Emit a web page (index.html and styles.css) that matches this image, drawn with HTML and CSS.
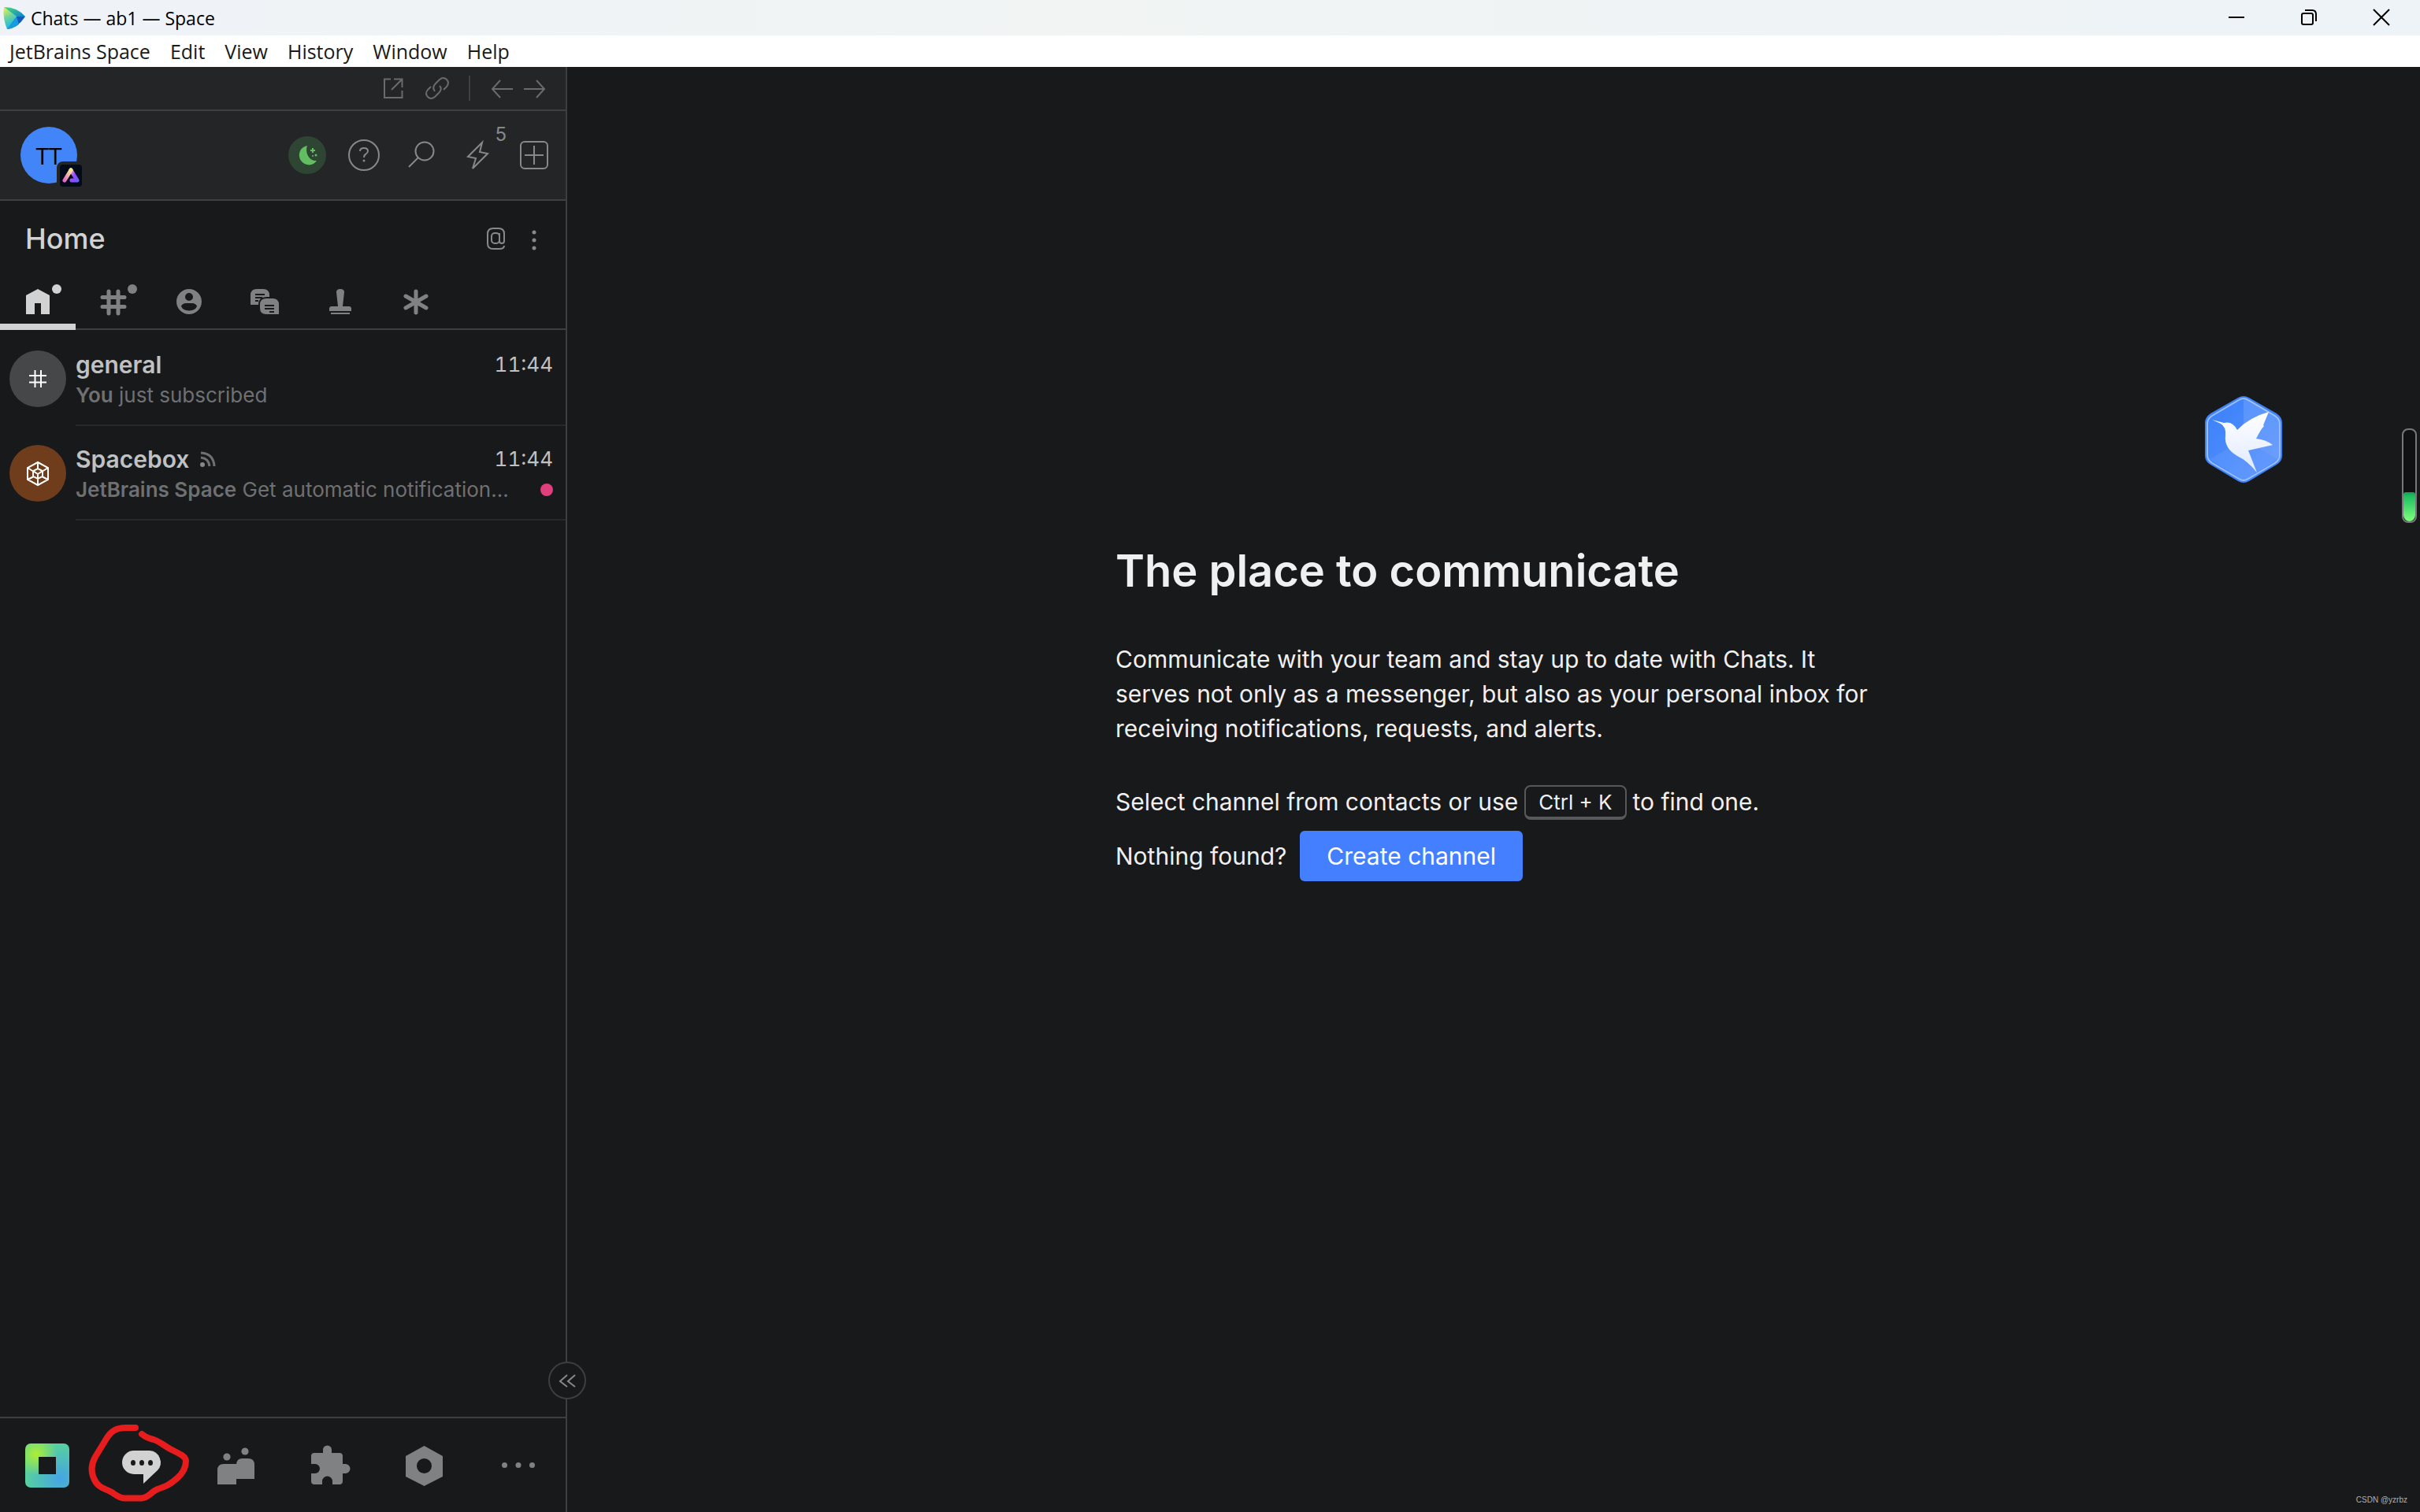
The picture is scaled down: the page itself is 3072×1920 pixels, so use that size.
FILE: index.html
```html
<!DOCTYPE html>
<html lang="en">
<head>
    <meta charset="UTF-8">
    <meta name="viewport" content="width=device-width, initial-scale=1.0">
    <title>Chats — ab1 — Space</title>
    <link rel="stylesheet" href="styles.css">
</head>
<body>
    <header class="titlebar">
        <svg class="app-logo" width="28" height="28" viewBox="0 0 28 28">
            <defs>
                <linearGradient id="logoLeft" x1="0" y1="0" x2="0.3" y2="1">
                    <stop offset="0" stop-color="#f6f547"/>
                    <stop offset="0.5" stop-color="#6fd49b"/>
                    <stop offset="1" stop-color="#16b8e8"/>
                </linearGradient>
                <linearGradient id="logoTop" x1="0" y1="0" x2="1" y2="1">
                    <stop offset="0" stop-color="#4ddc6f"/>
                    <stop offset="1" stop-color="#0a80d8"/>
                </linearGradient>
            </defs>
            <path d="M1 0Q-1 14 5 28L17 12Z" fill="url(#logoLeft)"/>
            <path d="M1 0Q18 0 28 12L17 12Z" fill="url(#logoTop)"/>
            <path d="M17 12H28Q18 27 5 28Z" fill="#1559bd"/>
            <path d="M17 12L20 22Q13 27 5 28Z" fill="#159be0"/>
        </svg>
        <span class="window-title">Chats — ab1 — Space</span>
        <div class="window-controls">
            <button aria-label="Minimize"><svg width="20" height="20" viewBox="0 0 20 20"><path d="M0 10H20"/></svg></button>
            <button aria-label="Restore"><svg width="20" height="20" viewBox="0 0 20 20"><rect x="1" y="5" width="14" height="14" rx="2"/><path d="M5 1H14Q19 1 19 6V15"/></svg></button>
            <button aria-label="Close"><svg width="20" height="20" viewBox="0 0 20 20"><path d="M0 0L20 20M20 0L0 20"/></svg></button>
        </div>
    </header>
    <nav class="menubar">
        <button>JetBrains Space</button>
        <button>Edit</button>
        <button>View</button>
        <button>History</button>
        <button>Window</button>
        <button>Help</button>
    </nav>

    <div class="workspace">
        <aside class="sidebar">
            <div class="browser-bar">
                <button aria-label="Open in browser"><svg width="32" height="32" viewBox="0 0 32 32"><path d="M13 4.500H5V28H27.500V19M17 4.500H27.500V15M27.500 4.500L14 18"/></svg></button>
                <button aria-label="Copy link"><svg width="32" height="32" viewBox="0 0 32 32"><path d="M13 20Q9 15 14 10L19 5Q24 1 28 5Q32 9 28 14L24 18M19 13Q23 17 18 22L13 27Q8 31 4 27Q0 23 4 18L8 14"/></svg></button>
                <span class="divider"></span>
                <div class="history">
                    <button aria-label="Back"><svg width="32" height="32" viewBox="0 0 32 32"><path d="M30 17H4M14 6L4 17L14 28"/></svg></button>
                    <button aria-label="Forward"><svg width="32" height="32" viewBox="0 0 32 32"><path d="M2 17H28M18 6L28 17L18 28"/></svg></button>
                </div>
            </div>

            <div class="user-bar">
                <button class="avatar user-avatar">TT
                    <span class="org-badge">
                        <svg width="28" height="28" viewBox="0 0 28 28">
                            <defs>
                                <linearGradient id="orgLeft" x1="0.8" y1="0" x2="0" y2="1">
                                    <stop offset="0" stop-color="#fde68c"/>
                                    <stop offset="1" stop-color="#e06ccb"/>
                                </linearGradient>
                                <linearGradient id="orgRight" x1="0" y1="0" x2="1" y2="1">
                                    <stop offset="0" stop-color="#e9b0e0"/>
                                    <stop offset="0.5" stop-color="#9a48ff"/>
                                    <stop offset="1" stop-color="#6a5cff"/>
                                </linearGradient>
                            </defs>
                            <path d="M14 7L22 20H15" stroke="url(#orgRight)"/>
                            <path d="M6 20L14 7" stroke="url(#orgLeft)"/>
                        </svg>
                    </span>
                </button>
                <div class="user-actions">
                    <button class="status" aria-label="Do not disturb"><svg width="48" height="48" viewBox="0 0 48 48"><path d="M24 12C21 20 26 32 36 31C32 38 22 38 17 32C11 25 14 14 24 12Z"/><path d="M31 15V21M28 18H34" class="spark"/><circle cx="35" cy="24" r="1.500"/><circle cx="31" cy="25" r="1"/></svg></button>
                    <button aria-label="Help"><svg width="48" height="48" viewBox="0 0 48 48"><circle cx="24" cy="24" r="19"/><path d="M19 19Q19 15 24 15Q29 15 29 19Q29 21 26 23Q24 24 24 27"/><circle cx="24" cy="31" r="1.500" class="solid"/></svg></button>
                    <button aria-label="Search"><svg width="48" height="48" viewBox="0 0 48 48"><circle cx="29" cy="19" r="11.500"/><path d="M21 27L9 39"/></svg></button>
                    <button class="todo" aria-label="To-do"><svg width="48" height="48" viewBox="0 0 48 48"><path d="M30 8L12 26L22 28L18 41L37 22L27 20Z"/></svg><span class="count">5</span></button>
                    <button aria-label="Create"><svg width="48" height="48" viewBox="0 0 48 48"><rect x="7" y="7" width="34" height="34" rx="5"/><path d="M24 12V36M12 24H36"/></svg></button>
                </div>
            </div>

            <div class="section-head">
                <h1>Home</h1>
                <div class="section-actions">
                    <button aria-label="Mentions"><svg width="48" height="48" viewBox="0 0 48 48"><rect x="18" y="17" width="10" height="13" rx="4"/><path d="M28 17V27Q28 30 31 30Q34 30 34 27V18Q34 11 27 11H20Q13 11 13 18V30Q13 37 20 37H28Q34 37 34 33"/></svg></button>
                    <button aria-label="More options"><svg width="48" height="48" viewBox="0 0 48 48" class="dots"><circle cx="24" cy="16" r="2.500"/><circle cx="24" cy="26" r="2.500"/><circle cx="24" cy="36" r="2.500"/></svg></button>
                </div>
            </div>

            <nav class="tabs">
                <button class="tab active unread" aria-label="Home"><svg width="48" height="48" viewBox="0 0 48 48"><path d="M9 16L24 8L39 16V40H28V26H20V40H9Z"/></svg></button>
                <button class="tab unread" aria-label="Channels"><svg width="48" height="48" viewBox="0 0 48 48"><path class="thick" d="M18 11V39M30 11V39M10 18.500H38M10 30.500H38"/></svg></button>
                <button class="tab" aria-label="People"><svg width="48" height="48" viewBox="0 0 48 48"><path fill-rule="evenodd" d="M24 8A16 16 0 1 1 24 40A16 16 0 1 1 24 8ZM24 13A5 5 0 1 0 24 23A5 5 0 1 0 24 13ZM14 29.500Q15 35 24 35.500Q33 35 34 29.500Q32 26 28 26H20Q16 26 14 29.500Z"/></svg></button>
                <button class="tab" aria-label="Threads"><svg width="48" height="48" viewBox="0 0 48 48"><path d="M6 28V16Q6 8 14 8H22Q30 8 30 16V18H26Q16 18 16 28Z"/><path d="M26 20H34Q42 20 42 28V40H26Q18 40 18 32V28Q18 20 26 20Z"/><path class="cut" d="M12 15H24M12 19H21M12 23H16M24 29H36M24 33H36M30 37H36"/></svg></button>
                <button class="tab" aria-label="Requests"><svg width="48" height="48" viewBox="0 0 48 48"><path d="M19 12Q19 8 24 8Q29 8 29 12L27 30H35Q38 30 38 33V36H10V33Q10 30 13 30H21ZM12 38H36V40H12Z"/></svg></button>
                <button class="tab" aria-label="Other"><svg width="48" height="48" viewBox="0 0 48 48"><path class="thick" d="M24 11V38M11 17L37 32M37 17L11 32"/></svg></button>
            </nav>

            <ul class="channels">
                <li>
                    <a href="#general" class="channel">
                        <span class="avatar channel-avatar"><svg width="32" height="32" viewBox="0 0 32 32"><path d="M12.500 5V27M20 5V27M5 12H27M5 20.500H27"/></svg></span>
                        <span class="channel-body">
                            <span class="line"><strong class="name">general</strong><time>11:44</time></span>
                            <span class="line"><span class="preview"><b>You</b> just subscribed</span></span>
                        </span>
                    </a>
                </li>
                <li>
                    <a href="#spacebox" class="channel">
                        <span class="avatar channel-avatar spacebox"><svg width="32" height="32" viewBox="0 0 32 32"><path d="M16 2L29 9V24L16 31L3 24V9ZM16 2V10M3 9L11 14M29 9L21 14M3 24L11 20M29 24L21 20M16 31V17M16 10L22 13V20L16 23L10 20V13ZM10 13L16 17L22 13"/></svg></span>
                        <span class="channel-body">
                            <span class="line">
                                <strong class="name">Spacebox</strong>
                                <svg class="feed" width="20" height="20" viewBox="0 0 20 20"><circle cx="3" cy="17" r="3" class="solid"/><path d="M1 8Q11 9 12 19M1 2Q17 3 18 19"/></svg>
                                <time>11:44</time>
                            </span>
                            <span class="line"><span class="preview"><b>JetBrains Space</b> Get automatic notification...</span><i class="unread-dot"></i></span>
                        </span>
                    </a>
                </li>
            </ul>

            <button class="collapse" aria-label="Collapse sidebar"><svg width="24" height="24" viewBox="0 0 24 24"><path d="M12 5L3 13L12 20M22 5L13 13L22 20"/></svg></button>

            <nav class="bottom-nav">
                <a href="#org" aria-label="Organization">
                    <span class="org-logo"></span>
                </a>
                <a href="#chats" class="active" aria-label="Chats">
                    <svg width="80" height="80" viewBox="0 0 80 80"><path fill-rule="evenodd" d="M30 21H50A15 15 0 0 1 60 46L42 63V51H30A15 15 0 0 1 30 21ZM29 33A3 3.500 0 1 0 29 40A3 3.500 0 1 0 29 33ZM40 33A3 3.500 0 1 0 40 40A3 3.500 0 1 0 40 33ZM51 33A3 3.500 0 1 0 51 40A3 3.500 0 1 0 51 33Z"/></svg>
                    <svg class="scribble" width="136" height="110" viewBox="0 0 136 110"><path d="M62 13H50C38 13 31 17 25 27L11 50C6 59 5 68 9 77C14 90 24 90 32 95C38 99 41 102 48 102.500H70C79 102 82 94 90 91C99 88 105 86 115 77C123 70 126 62 126 55C126 49 114 44 106 40C97 35 92 30 85 28Q76 26 70 21"/></svg>
                </a>
                <a href="#teams" aria-label="Teams">
                    <svg width="80" height="80" viewBox="0 0 80 80"><circle cx="28" cy="29" r="4.600"/><circle cx="51" cy="22" r="4.600"/><path d="M16 64V46Q16 38 24 38H40Q41 31 47 31H55Q63 31 63 39V57H40V64Z"/></svg>
                </a>
                <a href="#extensions" aria-label="Extensions">
                    <svg width="80" height="80" viewBox="0 0 80 80"><path d="M19 24H30V20A5.500 5.500 0 0 1 41 20V24H51Q55 24 55 28V38H58.500A6 6 0 0 1 58.500 50H55V60Q55 64 51 64H42V60A6.500 6.500 0 0 0 29 60V64H19Q15 64 15 60V50H20A6 6 0 0 0 20 38H15V28Q15 24 19 24Z"/></svg>
                </a>
                <a href="#administration" aria-label="Administration">
                    <svg width="80" height="80" viewBox="0 0 80 80"><path fill-rule="evenodd" d="M38.500 15L62 28V54L38.500 66L15 54V28ZM38.500 31A9.500 9.500 0 1 0 38.500 50A9.500 9.500 0 1 0 38.500 31Z"/></svg>
                </a>
                <a href="#more" aria-label="More">
                    <svg width="80" height="80" viewBox="0 0 80 80"><circle cx="20.500" cy="39.500" r="3.500"/><circle cx="38" cy="39.500" r="3.500"/><circle cx="55.500" cy="39.500" r="3.500"/></svg>
                </a>
            </nav>
        </aside>

        <main class="content">
            <section class="welcome">
                <h2>The place to communicate</h2>
                <p>Communicate with your team and stay up to date with Chats. It serves not only as a messenger, but also as your personal inbox for receiving notifications, requests, and alerts.</p>
                <div class="hint">Select channel from contacts or use <kbd>Ctrl + K</kbd> to find one.</div>
                <div class="create">Nothing found? <button>Create channel</button></div>
            </section>
        </main>
    </div>

    <!-- desktop widgets floating over the window -->
    <svg class="bird" width="100" height="110" viewBox="0 0 100 110">
        <defs>
            <linearGradient id="birdBg" x1="0" y1="0" x2="1" y2="1">
                <stop offset="0" stop-color="#3a80fb"/>
                <stop offset="1" stop-color="#5a94fd"/>
            </linearGradient>
            <linearGradient id="birdBody" x1="0" y1="0" x2="0" y2="1">
                <stop offset="0" stop-color="#ffffff"/>
                <stop offset="1" stop-color="#dfe9ff"/>
            </linearGradient>
        </defs>
        <path d="M43 2Q50 -2 57 2L92 22Q99 27 99 34V76Q99 83 92 87L57 108Q50 112 43 108L8 87Q1 83 1 76V34Q1 27 8 22Z" fill="#3d82f8"/>
        <path d="M44 5Q50 1 56 5L90 25Q96 29 96 35V75Q96 81 90 85L56 105Q50 109 44 105L10 85Q4 81 4 75V35Q4 29 10 25Z" fill="url(#birdBg)" stroke="#9bbffc" stroke-width="2"/>
        <path d="M50 4L56 5L90 25Q95 29 95 35V75L93 80L50 55Z" fill="#ffffff" fill-opacity="0.120"/>
        <path d="M50 55L93 80L56 104Q50 108 44 104L7 80Z" fill="#ffffff" fill-opacity="0.070"/>
        <path d="M10 30L25 34Q36 31 42 43Q57 27 82 20L75 37L76 38Q72 42 66 54Q78 55 87 62L56 69L67 97Q55 82 42 76Q25 66 27 50Q28 39 21 35Z" fill="url(#birdBody)"/>
    </svg>
    <div class="gauge"><span class="gauge-level"></span></div>
    <span class="watermark">CSDN @yzrbz</span>
</body>
</html>
```

FILE: styles.css
```css
* {
    box-sizing: border-box;
}

body {
    margin: 0;
    height: 100vh;
    display: flex;
    flex-direction: column;
    position: relative;
    overflow: hidden;
    background: #18191b;
    color: #f0f0f0;
    font-family: Inter, "Liberation Sans", sans-serif;
    font-size: 30px;
}

button {
    border: 0;
    padding: 0;
    background: none;
    color: inherit;
    font: inherit;
    cursor: pointer;
}

a {
    color: inherit;
    text-decoration: none;
}

svg {
    display: block;
    overflow: visible;
}

/* window frame */
.titlebar {
    display: flex;
    align-items: center;
    height: 45px;
    padding: 0 3px 0 4px;
    background: linear-gradient(90deg, #eff3f8, #f1f4f3 45%, #eef3f8);
    color: #000;
    font-family: "Open Sans", "Noto Sans", sans-serif;
    font-size: 23px;
}

.window-title {
    margin-left: 7px;
}

.window-controls {
    display: flex;
    height: 43px;
    margin-left: auto;
    align-self: flex-start;
}

.window-controls button {
    display: flex;
    justify-content: center;
    align-items: center;
    width: 92px;
}

.window-controls svg {
    fill: none;
    stroke: #000;
    stroke-width: 2;
}

.menubar {
    display: flex;
    align-items: center;
    gap: 25px;
    height: 40px;
    padding: 0 12px;
    background: #fff;
    color: #1a1a1a;
    font-family: "Open Sans", "Noto Sans", sans-serif;
    font-size: 25px;
}

.workspace {
    flex: 1;
    display: flex;
    min-height: 0;
}

/* sidebar */
.sidebar {
    position: relative;
    display: flex;
    flex-direction: column;
    width: 720px;
    border-right: 2px solid #3d3e40;
}

.sidebar svg {
    fill: none;
    stroke: #87888a;
    stroke-width: 2;
}

.sidebar svg .solid,
.sidebar .dots {
    fill: #87888a;
    stroke: none;
}

.browser-bar {
    display: flex;
    justify-content: flex-end;
    align-items: center;
    gap: 24px;
    height: 56px;
    padding-right: 23px;
    background: #242527;
    border-bottom: 2px solid #3f4042;
}

.browser-bar svg {
    stroke: #6a6b6d;
}

.divider {
    width: 2px;
    height: 32px;
    background: #3f4042;
}

.history {
    display: flex;
    gap: 10px;
}

.user-bar {
    display: flex;
    justify-content: space-between;
    align-items: center;
    height: 114px;
    padding: 0 16px 0 26px;
    background: #242527;
    border-bottom: 2px solid #3f4042;
}

.avatar {
    display: flex;
    justify-content: center;
    align-items: center;
    width: 72px;
    height: 72px;
    border-radius: 50%;
}

.user-avatar {
    position: relative;
    background: #4285f9;
    color: #000;
    font-family: "Open Sans", "Noto Sans", sans-serif;
    font-size: 30px;
}

.org-badge {
    position: absolute;
    right: -10px;
    bottom: -8px;
    border: 4px solid #242527;
    border-radius: 8px;
    background: #030a18;
}

.sidebar .org-badge svg {
    stroke-width: 5;
    stroke-linecap: round;
    stroke-linejoin: round;
}

.user-actions,
.section-actions {
    display: flex;
    gap: 24px;
}

.status {
    border-radius: 50%;
    background: #2e4534;
}

.sidebar .status svg {
    fill: #62be60;
    stroke: none;
}

.sidebar .status .spark {
    stroke: #62be60;
    stroke-width: 2;
}

.todo {
    position: relative;
}

.count {
    position: absolute;
    top: -17px;
    right: -13px;
    color: #87888a;
    font-size: 24px;
}

.section-head {
    display: flex;
    justify-content: space-between;
    align-items: center;
    height: 96px;
    padding: 0 16px 0 32px;
}

.section-actions {
    gap: 0;
}

h1 {
    margin: 0;
    color: #d2d2d2;
    font-size: 36px;
    font-weight: 500;
}

.tabs {
    display: flex;
    height: 68px;
    border-bottom: 2px solid #3d3e40;
}

.tab {
    display: flex;
    justify-content: center;
    position: relative;
    width: 96px;
    height: 68px;
    padding-top: 8px;
    border-bottom: 8px solid transparent;
    color: #808183;
}

.tab.active {
    border-color: #d2d2d2;
    color: #d2d2d2;
}

.sidebar .tab svg {
    fill: currentColor;
    stroke: none;
}

.sidebar .tab .thick {
    stroke: currentColor;
    stroke-width: 5;
    stroke-linecap: round;
}

.sidebar .tab .cut {
    stroke: #18191b;
    stroke-width: 2;
}

.tab.unread::after {
    content: "";
    position: absolute;
    top: 10px;
    right: 18px;
    width: 12px;
    height: 12px;
    border-radius: 50%;
    background: currentColor;
}

.channels {
    flex: 1;
    margin: 0;
    padding: 2px 0 0;
    list-style: none;
}

.channel {
    display: flex;
    align-items: center;
    gap: 12px;
    height: 120px;
    padding-left: 12px;
}

.channel-avatar {
    background: #464749;
}

.channel-avatar.spacebox {
    background: #6f3d1b;
}

.sidebar .channel-avatar svg {
    stroke: #fff;
}

.channel-body {
    flex: 1;
    display: flex;
    flex-direction: column;
    min-width: 0;
    height: 120px;
    padding: 22px 16px 0 0;
    border-bottom: 2px solid #27282a;
}

.line {
    display: flex;
    align-items: center;
    height: 39px;
}

.name {
    color: #c0c1c2;
    font-size: 30px;
    font-weight: 600;
}

.feed {
    margin-left: 14px;
}

.sidebar .feed {
    stroke: #6f7072;
    stroke-width: 3;
}

time {
    margin-left: auto;
    color: #c0c1c2;
    font-size: 26px;
    font-variant-numeric: tabular-nums;
}

.preview {
    overflow: hidden;
    color: #6f7072;
    font-size: 26px;
    text-overflow: ellipsis;
    white-space: nowrap;
}

.preview b {
    font-weight: 600;
}

.unread-dot {
    width: 16px;
    height: 16px;
    margin-left: auto;
    border-radius: 50%;
    background: #e03e7c;
}

.collapse {
    position: absolute;
    right: -26px;
    bottom: 143px;
    display: flex;
    justify-content: center;
    align-items: center;
    width: 48px;
    height: 48px;
    border: 2px solid #3d3e40;
    border-radius: 50%;
    background: #18191b;
}

.bottom-nav {
    display: flex;
    height: 121px;
    border-top: 2px solid #3d3e40;
}

.bottom-nav a {
    flex: 0 0 120px;
    position: relative;
    display: flex;
    justify-content: center;
    align-items: center;
}

.sidebar .bottom-nav svg {
    fill: #808183;
    stroke: none;
}

.sidebar .bottom-nav .active svg {
    fill: #d2d2d2;
}

.org-logo {
    width: 56px;
    height: 56px;
    border: 17px solid transparent;
    border-radius: 7px;
    background: linear-gradient(#18191b, #18191b) padding-box, radial-gradient(circle at 25% 25%, #aeee33, transparent 45%) border-box, radial-gradient(circle at 80% 80%, #45a4e4, #58d49a 75%) border-box;
}

.sidebar .bottom-nav .active .scribble {
    position: absolute;
    top: -1px;
    left: -10px;
    fill: none;
    stroke: #e71d1d;
    stroke-width: 8;
    stroke-linecap: round;
}

/* main area */
.content {
    flex: 1;
    padding-top: 608px;
}

.welcome {
    max-width: 960px;
    margin: 0 auto;
    line-height: 44px;
}

h2 {
    margin: 0 0 58px;
    font-size: 56px;
    font-weight: 600;
    line-height: 64px;
}

.welcome p {
    margin: 0 0 48px;
}

.hint,
.create {
    display: flex;
    align-items: center;
    gap: 8px;
}

kbd {
    height: 44px;
    margin-top: 2px;
    padding: 0 16px;
    border: 2px solid #57585a;
    border-bottom-width: 4px;
    border-radius: 8px;
    font-family: inherit;
    font-size: 26px;
    line-height: 40px;
}

.create {
    gap: 17px;
    margin-top: 14px;
}

.create button {
    height: 64px;
    padding: 0 34px;
    border-radius: 6px;
    background: #437fff;
    color: #fff;
}

/* overlays */
.bird {
    position: absolute;
    top: 503px;
    right: 174px;
}

.gauge {
    position: absolute;
    top: 544px;
    right: 4px;
    display: flex;
    align-items: flex-end;
    width: 19px;
    height: 120px;
    border: 2px solid #77787a;
    border-radius: 8px;
    background: #101112;
}

.gauge-level {
    flex: 1;
    height: 37px;
    border-radius: 3px 3px 8px 8px;
    background: linear-gradient(#10a050, #20c060 15%, #80ff80);
}

.watermark {
    position: absolute;
    right: 16px;
    bottom: 10px;
    color: #b0b0b0;
    font-family: "Liberation Sans", sans-serif;
    font-size: 10px;
}
```
